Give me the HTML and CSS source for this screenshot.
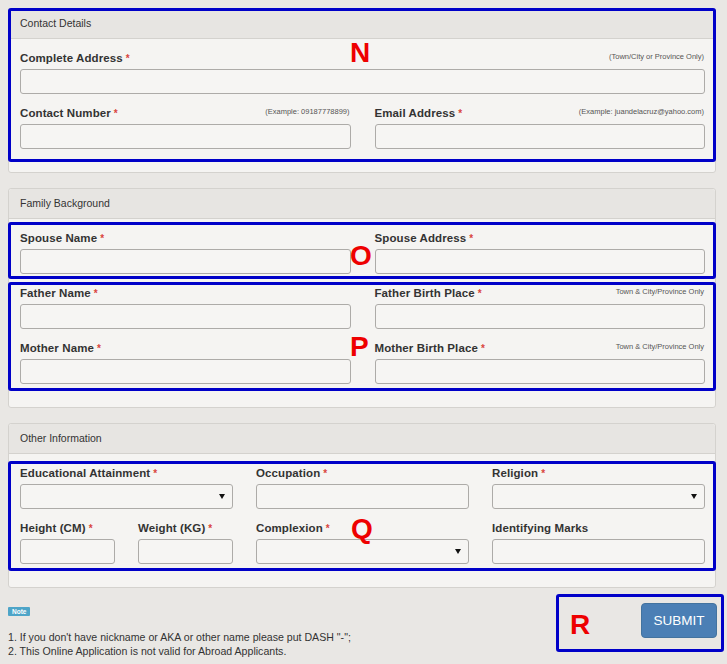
FILE: index.html
```html
<!DOCTYPE html>
<html lang="en">
<head>
<meta charset="utf-8">
<title>Application Form</title>
<link rel="stylesheet" href="styles.css">
</head>
<body>
<div class="page">
  <section class="panel">
    <div class="panel-heading">Contact Details</div>
    <div class="panel-body">
      <div class="group">
        <div class="label-row"><label>Complete Address<span class="req">*</span></label><span class="hint">(Town/City or Province Only)</span></div>
        <input class="field" type="text">
      </div>
      <div class="grid grid-2">
        <div class="group">
          <div class="label-row"><label>Contact Number<span class="req">*</span></label><span class="hint">(Example: 09187778899)</span></div>
          <input class="field" type="text">
        </div>
        <div class="group">
          <div class="label-row"><label>Email Address<span class="req">*</span></label><span class="hint">(Example: juandelacruz@yahoo.com)</span></div>
          <input class="field" type="text">
        </div>
      </div>
    </div>
  </section>

  <section class="panel">
    <div class="panel-heading">Family Background</div>
    <div class="panel-body">
      <div class="grid grid-2">
        <div class="group">
          <div class="label-row"><label>Spouse Name<span class="req">*</span></label></div>
          <input class="field" type="text">
        </div>
        <div class="group">
          <div class="label-row"><label>Spouse Address<span class="req">*</span></label></div>
          <input class="field" type="text">
        </div>
        <div class="group">
          <div class="label-row"><label>Father Name<span class="req">*</span></label></div>
          <input class="field" type="text">
        </div>
        <div class="group">
          <div class="label-row"><label>Father Birth Place<span class="req">*</span></label><span class="hint">Town &amp; City/Province Only</span></div>
          <input class="field" type="text">
        </div>
        <div class="group">
          <div class="label-row"><label>Mother Name<span class="req">*</span></label></div>
          <input class="field" type="text">
        </div>
        <div class="group">
          <div class="label-row"><label>Mother Birth Place<span class="req">*</span></label><span class="hint">Town &amp; City/Province Only</span></div>
          <input class="field" type="text">
        </div>
      </div>
    </div>
  </section>

  <section class="panel">
    <div class="panel-heading">Other Information</div>
    <div class="panel-body">
      <div class="grid grid-3">
        <div class="group">
          <div class="label-row"><label>Educational Attainment<span class="req">*</span></label></div>
          <div class="field select"><select></select><svg class="arrow" width="6" height="5" viewBox="0 0 6 5"><path d="M0 0H6L3 5Z" fill="#111"/></svg></div>
        </div>
        <div class="group">
          <div class="label-row"><label>Occupation<span class="req">*</span></label></div>
          <input class="field" type="text">
        </div>
        <div class="group">
          <div class="label-row"><label>Religion<span class="req">*</span></label></div>
          <div class="field select"><select></select><svg class="arrow" width="6" height="5" viewBox="0 0 6 5"><path d="M0 0H6L3 5Z" fill="#111"/></svg></div>
        </div>
        <div class="grid grid-sub">
          <div class="group">
            <div class="label-row"><label>Height (CM)<span class="req">*</span></label></div>
            <input class="field" type="text">
          </div>
          <div class="group">
            <div class="label-row"><label>Weight (KG)<span class="req">*</span></label></div>
            <input class="field" type="text">
          </div>
        </div>
        <div class="group">
          <div class="label-row"><label>Complexion<span class="req">*</span></label></div>
          <div class="field select"><select></select><svg class="arrow" width="6" height="5" viewBox="0 0 6 5"><path d="M0 0H6L3 5Z" fill="#111"/></svg></div>
        </div>
        <div class="group">
          <div class="label-row"><label>Identifying Marks</label></div>
          <input class="field" type="text">
        </div>
      </div>
    </div>
  </section>

  <div class="footer">
    <div class="note">
      <span class="badge">Note</span>
      <ol class="note-list">
        <li>1. If you don't have nickname or AKA or other name please put DASH "-";</li>
        <li>2. This Online Application is not valid for Abroad Applicants.</li>
      </ol>
    </div>
    <button class="submit" type="button">SUBMIT</button>
  </div>

  <div class="mark box-n"></div>
  <div class="mark box-o"></div>
  <div class="mark box-p"></div>
  <div class="mark box-q"></div>
  <div class="mark box-r"></div>
  <span class="letter letter-n">N</span>
  <span class="letter letter-o">O</span>
  <span class="letter letter-p">P</span>
  <span class="letter letter-q">Q</span>
  <span class="letter letter-r">R</span>
</div>
</body>
</html>
```

FILE: styles.css
```css
* { box-sizing: border-box; }

html, body {
  margin: 0;
  background: #e9e7e4;
}

body {
  font-family: "Liberation Sans", Arial, sans-serif;
  color: #333;
}

.page {
  position: relative;
  width: 724px;
  padding: 8px 8px 0 8px;
}

.panel {
  width: 708px;
  border: 1px solid #d4d2ce;
  border-radius: 3px;
  background: #f5f4f2;
  margin-bottom: 15px;
}

.panel-heading {
  height: 30px;
  line-height: 29px;
  padding: 0 11px;
  font-size: 10.5px;
  color: #333;
  background: #e7e5e2;
  border-bottom: 1px solid #d4d2ce;
  border-radius: 3px 3px 0 0;
}

.panel-body {
  padding: 10px 10px 13px 11px;
}

.grid {
  display: grid;
  column-gap: 24px;
}

.grid-2 { grid-template-columns: 1fr 1fr; }
.grid-3 { grid-template-columns: 1fr 1fr 1fr; column-gap: 23px; }
.grid-sub { grid-template-columns: 1fr 1fr; column-gap: 23px; }

.group {
  margin-bottom: 10px;
}

.label-row {
  display: flex;
  justify-content: space-between;
  align-items: center;
  height: 18px;
  margin-bottom: 2px;
}

.label-row label {
  font-size: 11.5px;
  font-weight: bold;
  color: #333;
  line-height: 18px;
  letter-spacing: 0.1px;
}

.req {
  color: #d9453d;
  font-size: 10px;
  margin-left: 3px;
}

.hint {
  font-size: 7.5px;
  color: #555;
  margin-bottom: 4px;
  margin-right: 1px;
}

.field {
  display: block;
  width: 100%;
  height: 25px;
  border: 1px solid #adaba8;
  border-radius: 3px;
  background: #f6f5f3;
  font: inherit;
  margin: 0;
}

.select {
  display: flex;
  align-items: center;
  padding-right: 7px;
}

.select select {
  flex: 1;
  height: 100%;
  border: 0;
  background: transparent;
  appearance: none;
  -webkit-appearance: none;
  outline: none;
}

.arrow {
  flex: none;
  display: block;
}

.footer {
  display: flex;
  justify-content: space-between;
  align-items: flex-start;
  width: 709px;
}

.note {
  padding-top: 4px;
  display: flex;
  flex-direction: column;
  align-items: flex-start;
}

.badge {
  display: block;
  height: 9px;
  line-height: 9px;
  padding: 0 4px;
  font-size: 6.5px;
  font-weight: bold;
  color: #fff;
  background: #4ea5c8;
  border-radius: 1px;
}

.note-list {
  list-style: none;
  margin: 14px 0 0 0;
  padding: 0;
  font-size: 10.6px;
  line-height: 14px;
  color: #333;
}

.submit {
  width: 76px;
  height: 35px;
  border: 1px solid #43739f;
  border-radius: 4px;
  background: #4b7fb5;
  color: #fff;
  font-family: "Liberation Sans", Arial, sans-serif;
  font-size: 13.5px;
  padding: 0;
}

.mark {
  position: absolute;
  border: 3px solid #0000c8;
  border-radius: 3px;
}

.box-n { left: 8px; top: 8px; width: 708px; height: 154px; }
.box-o { left: 8px; top: 222px; width: 708px; height: 57px; }
.box-p { left: 8px; top: 282px; width: 708px; height: 109px; }
.box-q { left: 8px; top: 461px; width: 708px; height: 110px; }
.box-r { left: 556px; top: 594px; width: 168px; height: 58px; }

.letter {
  position: absolute;
  font-family: "Liberation Sans", Arial, sans-serif;
  font-weight: bold;
  font-size: 28px;
  line-height: 28px;
  color: #ee0000;
}

.letter-n { left: 350px; top: 39px; }
.letter-o { left: 350px; top: 242px; }
.letter-p { left: 350px; top: 333px; }
.letter-q { left: 351px; top: 515px; }
.letter-r { left: 570px; top: 611px; }
```
